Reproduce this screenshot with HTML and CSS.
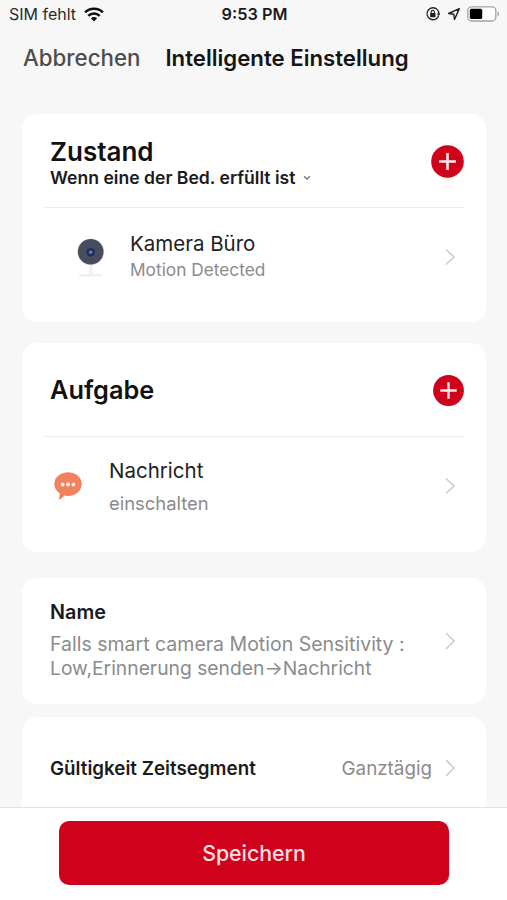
FILE: index.html
```
<!DOCTYPE html>
<html lang="de">
<head>
<meta charset="utf-8">
<title>Intelligente Einstellung</title>
<link rel="stylesheet" href="styles.css">
</head>
<body>
<div class="screen">
  <div class="status">
    <div class="status-left">
      <span class="carrier">SIM fehlt</span>
      <svg width="20" height="15" viewBox="0 0 20 15"><g fill="none" stroke="#111" stroke-width="2.5"><path d="M1.1 5.4a12.6 12.6 0 0 1 17.8 0"/><path d="M4.3 8.8a8.1 8.1 0 0 1 11.4 0"/></g><path d="M10 14.4l-3.1-3.1a4.4 4.4 0 0 1 6.2 0z" fill="#111"/></svg>
    </div>
    <span class="time">9:53 PM</span>
    <div class="status-right">
      <svg width="16" height="16" viewBox="0 0 16 16"><path d="M12.4 3.6A6 6 0 1 0 13.6 10" fill="none" stroke="#222" stroke-width="1.3"/><path d="M12.4 3.6a6 6 0 0 1 1.4 4.4" fill="none" stroke="#222" stroke-width="1.3"/><path d="M11.9 7.5h3.4l-1.7 2.7z" fill="#222"/><rect x="5.1" y="7" width="5.4" height="4.200" rx=".6" fill="#222"/><path d="M6.2 7.4V6a1.6 1.6 0 0 1 3.2 0v1.4" fill="none" stroke="#222" stroke-width="1.1"/></svg>
      <svg width="14" height="14" viewBox="0 0 14 14"><path d="M12.3 1.6L1.6 6.5l5.2.8.7 5.2z" fill="none" stroke="#222" stroke-width="1.4" stroke-linejoin="round"/></svg>
      <svg width="33" height="16" viewBox="0 0 33 16"><rect x=".8" y=".8" width="28" height="14.2" rx="3.8" fill="#fff" stroke="#a3a3a3" stroke-width="1.3"/><rect x="2.8" y="2.8" width="12.4" height="10.2" rx="1.6" fill="#000"/><path d="M30.5 5.6q1.6.5 1.6 2.3t-1.6 2.3z" fill="#a3a3a3"/></svg>
    </div>
  </div>
  <div class="nav">
    <span class="cancel">Abbrechen</span>
    <span class="title">Intelligente Einstellung</span>
  </div>

  <div class="content">
    <section class="card card-condition">
      <div class="head">
        <div class="head-text">
          <div class="heading">Zustand</div>
          <div class="sub"><span>Wenn eine der Bed. erfüllt ist</span><svg width="8" height="6" viewBox="0 0 8 6"><path d="M1 1.2l3 2.8 3-2.8" fill="none" stroke="#777" stroke-width="1.3"/></svg></div>
        </div>
        <svg width="33" height="33" viewBox="0 0 33 33"><circle cx="16.5" cy="16.5" r="16.3" fill="#d0021b"/><path d="M8 16.5h17M16.5 8v17" stroke="#ffe9ec" stroke-width="2.6"/></svg>
      </div>
      <div class="row row-camera">
        <svg class="camera" width="32" height="56" viewBox="0 0 32 56"><path d="M16 27v24" stroke="#f3f3f4" stroke-width="4"/><rect x="4" y="50" width="23" height="2.500" rx="1.200" fill="#efeff0"/><circle cx="15.7" cy="27.8" r="13.4" fill="#dcdde1"/><circle cx="15.7" cy="27.8" r="12.8" fill="#474d61"/><circle cx="15.7" cy="28.2" r="4.3" fill="#242b52"/><circle cx="15.7" cy="28.2" r="2.4" fill="#2c4687"/><circle cx="15.7" cy="28.2" r="1" fill="#a9b5d6"/></svg>
        <div class="row-text">
          <div class="row-title">Kamera Büro</div>
          <div class="row-sub">Motion Detected</div>
        </div>
        <svg class="chev" width="12" height="18" viewBox="0 0 12 18"><path d="M2 1.5L10 9l-8 7.5" fill="none" stroke="#cecece" stroke-width="1.7"/></svg>
      </div>
    </section>

    <section class="card card-task">
      <div class="head">
        <div class="heading">Aufgabe</div>
        <svg width="31" height="31" viewBox="0 0 31 31"><circle cx="15.5" cy="15.5" r="15.4" fill="#d0021b"/><path d="M7.3 15.5h16.4M15.5 7.3v16.4" stroke="#ffe9ec" stroke-width="2.4"/></svg>
      </div>
      <div class="row row-message">
        <svg width="28" height="28" viewBox="0 0 28 28"><path d="M14 .3C6.400.3.300 5.400.300 12c0 3.800 2 7.200 5.300 9.300-.1 2-.3 3.900-.5 6.200 1.900-.6 3.800-2 5.100-4 1.200.3 2.500.4 3.800.4 7.700 0 13.700-5.200 13.700-11.900S21.700.3 14 .3z" fill="#f1825f"/><g fill="#fff0ea"><circle cx="8.6" cy="12.5" r="1.9"/><circle cx="14" cy="12.5" r="1.9"/><circle cx="19.4" cy="12.5" r="1.9"/></g></svg>
        <div class="row-text">
          <div class="row-title">Nachricht</div>
          <div class="row-sub">einschalten</div>
        </div>
        <svg class="chev" width="12" height="18" viewBox="0 0 12 18"><path d="M2 1.5L10 9l-8 7.5" fill="none" stroke="#cecece" stroke-width="1.7"/></svg>
      </div>
    </section>

    <section class="card card-name">
      <div class="name-text">
        <div class="label">Name</div>
        <div class="desc"><div class="desc-a">Falls smart camera Motion Sensitivity :</div><div class="desc-b">Low,Erinnerung senden→Nachricht</div></div>
      </div>
      <svg class="chev" width="12" height="18" viewBox="0 0 12 18"><path d="M2 1L10 9l-8 8" fill="none" stroke="#cecece" stroke-width="1.7"/></svg>
    </section>

    <section class="card card-time">
      <span class="time-label">Gültigkeit Zeitsegment</span>
      <span class="value">Ganztägig</span>
      <svg class="chev" width="12" height="18" viewBox="0 0 12 18"><path d="M2 1L10 9l-8 8" fill="none" stroke="#cecece" stroke-width="1.7"/></svg>
    </section>
  </div>

  <div class="footer">
    <button class="save">Speichern</button>
  </div>
</div>
</body>
</html>
```
FILE: styles.css
```
* { box-sizing: border-box; }
body { margin: 0; font-family: Inter, "Liberation Sans", sans-serif; color: #1b1b1b; }
svg { display: block; flex: none; }
.screen { height: 900px; display: flex; flex-direction: column; overflow: hidden; background: #f7f7f7; white-space: nowrap; }

.status { height: 28px; flex: none; display: grid; grid-template-columns: 1fr auto 1fr; align-items: center; padding: 0 7px 0 9px; font-size: 16px; }
.status-left { display: flex; align-items: center; gap: 8px; }
.carrier { color: #2b2b2b; }
.time { font-size: 16.3px; font-weight: 600; }
.status-right { display: flex; align-items: center; justify-content: flex-end; gap: 6px; }

.nav { height: 58px; flex: none; display: flex; align-items: center; padding-left: 23px; font-size: 22.3px; }
.cancel { font-weight: 500; color: #4d4d4d; }
.title { margin-left: 25px; font-weight: 600; font-size: 22.2px; color: #151515; }

.content { flex: 1; min-height: 0; overflow: hidden; padding: 28px 21px 0 22px; display: flex; flex-direction: column; }
.card { flex: none; background: #fff; border-radius: 15px; padding: 0 22px; }
.head { height: 94px; display: flex; align-items: center; justify-content: space-between; padding: 1px 0 0 6px; border-bottom: 1px solid #eee; }
.head-text { padding-top: 4px; }
.heading { font-size: 26px; line-height: 30px; font-weight: 600; color: #111; }
.sub { display: flex; align-items: center; gap: 8px; font-size: 17.6px; line-height: 22px; font-weight: 600; }
.row { display: flex; align-items: center; }
.row-title { font-size: 20.5px; color: #222; }
.row-sub { color: #8b8b8b; }
.chev { margin-left: auto; margin-right: 8px; }

.card-condition { height: 208px; }
.row-camera { height: 97px; padding-left: 31px; gap: 23px; line-height: 26px; }
.row-camera .row-sub { font-size: 17.3px; }
.camera { margin-bottom: 9px; }

.card-task { height: 209px; margin-top: 21px; }
.card-task .heading { font-size: 25.3px; }
.row-message { height: 98px; padding-left: 10px; gap: 27px; line-height: 33px; }
.row-message .row-text { padding-top: 2px; }
.row-message .row-sub { font-size: 18.4px; }

.card-name { height: 126px; margin-top: 26px; display: flex; align-items: center; padding-left: 28px; }
.name-text { line-height: 24px; padding-bottom: 3px; }
.label { font-size: 19.8px; font-weight: 600; }
.desc { margin-top: 8px; color: #8b8b8b; font-size: 19.5px; }
.desc-b { font-size: 19.3px; }

.card-time { height: 102px; margin-top: 13px; display: flex; align-items: center; padding-left: 28px; }
.time-label { font-size: 18.8px; font-weight: 600; }
.value { margin-left: auto; font-size: 18.8px; color: #8b8b8b; }
.card-time .chev { margin-left: 12px; }

.footer { height: 93px; flex: none; background: #fff; border-top: 1px solid #e2e2e2; padding: 13px 58px 0 59px; }
.save { display: block; width: 100%; height: 64px; border: 0; border-radius: 10px; background: #d0021b; color: #ffdfe3; font: 500 21.3px Inter, "Liberation Sans", sans-serif; }
```
